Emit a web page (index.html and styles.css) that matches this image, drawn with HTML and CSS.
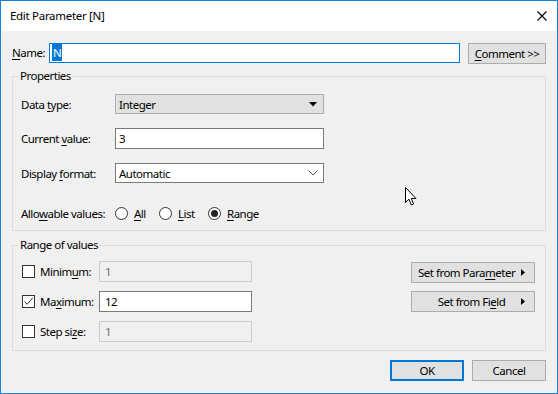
FILE: index.html
```html
<!DOCTYPE html>
<html lang="en">
<head>
    <meta charset="UTF-8">
    <title>Edit Parameter [N]</title>
    <link rel="stylesheet" href="styles.css">
</head>
<body>
    <div class="window">
        <div class="titlebar">
            <span class="title">Edit Parameter [N]</span>
            <svg class="close" width="10" height="10" viewBox="0 0 10 10">
                <path d="M0.5 0.5 L9.5 9.5 M9.5 0.5 L0.5 9.5" stroke="#000" stroke-width="1.1" fill="none"/>
            </svg>
        </div>

        <div class="content">
            <div class="name-row">
                <label class="name-label"><u>N</u>ame:</label>
                <div class="input name-input"><span class="sel">N</span></div>
                <button class="btn comment-btn"><u>C</u>omment &gt;&gt;</button>
            </div>

            <fieldset class="group props">
                <legend>Properties</legend>
                <div class="row row-type">
                    <span class="label">Data <u>t</u>ype:</span>
                    <div class="combo combo-ro">
                        <span>Integer</span>
                        <svg width="8" height="5" viewBox="0 0 8 5"><path d="M0 0 H8 L4 4.5 Z" fill="#000"/></svg>
                    </div>
                </div>
                <div class="row row-current">
                    <span class="label">Current <u>v</u>alue:</span>
                    <div class="input wide-input">3</div>
                </div>
                <div class="row row-format">
                    <span class="label">Display <u>f</u>ormat:</span>
                    <div class="combo combo-edit">
                        <span>Automatic</span>
                        <svg width="10" height="6" viewBox="0 0 10 6"><path d="M0.5 0.5 L5 5 L9.5 0.5" stroke="#555" stroke-width="1" fill="none"/></svg>
                    </div>
                </div>
                <div class="row row-allow">
                    <span class="label">Allo<u>w</u>able values:</span>
                    <span class="radio-item item-all"><span class="radio"></span><u>A</u>ll</span>
                    <span class="radio-item item-list"><span class="radio"></span><u>L</u>ist</span>
                    <span class="radio-item"><span class="radio checked"></span><u>R</u>ange</span>
                </div>
            </fieldset>

            <fieldset class="group range">
                <legend>Range of values</legend>
                <div class="range-body">
                    <div class="range-rows">
                        <div class="range-row">
                            <span class="check-label"><span class="checkbox"></span>Minim<u>u</u>m:</span>
                            <div class="input small-input disabled">1</div>
                        </div>
                        <div class="range-row">
                            <span class="check-label">
                                <span class="checkbox">
                                    <svg width="11" height="11" viewBox="0 0 11 11"><path d="M1.5 5.5 L4.2 8.3 L9.8 1.8" stroke="#333" stroke-width="1" fill="none"/></svg>
                                </span>Ma<u>x</u>imum:
                            </span>
                            <div class="input small-input">12</div>
                        </div>
                        <div class="range-row">
                            <span class="check-label"><span class="checkbox"></span>Step si<u>z</u>e:</span>
                            <div class="input small-input disabled">1</div>
                        </div>
                    </div>
                    <div class="range-buttons">
                        <button class="btn menu-btn">
                            <span>Set from Para<u>m</u>eter</span>
                            <svg width="4" height="7" viewBox="0 0 4 7"><path d="M0 0 L4 3.5 L0 7 Z" fill="#000"/></svg>
                        </button>
                        <button class="btn menu-btn">
                            <span class="center">Set from Fi<u>e</u>ld</span>
                            <svg width="4" height="7" viewBox="0 0 4 7"><path d="M0 0 L4 3.5 L0 7 Z" fill="#000"/></svg>
                        </button>
                    </div>
                </div>
            </fieldset>

            <div class="footer">
                <button class="btn dlg-btn default">OK</button>
                <button class="btn dlg-btn">Cancel</button>
            </div>
        </div>

        <!-- mouse pointer -->
        <svg class="pointer" width="13" height="20" viewBox="0 0 13 20">
            <path d="M0.5 0.5 L0.5 15.5 L4 12.2 L6.4 18 L8.6 17 L6.3 11.5 L11 11.5 Z" fill="#fff" stroke="#000" stroke-width="1" stroke-linejoin="miter"/>
        </svg>
    </div>
</body>
</html>
```

FILE: styles.css
```css
* {
    box-sizing: border-box;
}

body {
    margin: 0;
    background: #f0f0f0;
    font-family: 'Noto Sans', 'Open Sans', sans-serif;
    font-size: 11.5px;
    letter-spacing: -0.5px;
    color: #000;
    white-space: nowrap;
}

u {
    text-decoration: underline;
    text-underline-offset: 2px;
}

.window {
    position: relative;
    width: 558px;
    height: 394px;
    border: 1px solid #1883d7;
    background: #f0f0f0;
    display: flex;
    flex-direction: column;
}

.titlebar {
    height: 30px;
    background: #fff;
    display: flex;
    align-items: center;
    padding-left: 9px;
    padding-right: 10px;
    font-size: 11.5px;
    letter-spacing: -0.3px;
}

.title {
    flex: 1;
    line-height: 16px;
}

.close {
    display: block;
}

.content {
    flex: 1;
    padding: 12px 11px 0 11px;
}

.name-row {
    display: flex;
    align-items: flex-start;
    height: 21px;
}

.name-label {
    width: 37px;
    flex-shrink: 0;
    line-height: 20px;
}

.input {
    height: 21px;
    border: 1px solid #7a7a7a;
    background: #fff;
    padding: 0 3px;
    line-height: 19px;
    flex-shrink: 0;
}

.input.disabled {
    border-color: #cccccc;
    background: #f0f0f0;
    color: #6d6d6d;
}

.name-input {
    width: 411px;
    height: 20px;
    line-height: 18px;
    border-color: #0078d7;
    padding-left: 2px;
}

.sel {
    background: #0078d7;
    color: #fff;
    padding: 1px 1px;
}

.btn {
    font-family: inherit;
    font-size: 11.5px;
    letter-spacing: -0.5px;
    color: #000;
    background: #e1e1e1;
    border: 1px solid #adadad;
    height: 21px;
    padding: 0;
    margin: 0;
    line-height: 19px;
    flex-shrink: 0;
    white-space: nowrap;
}

.comment-btn {
    width: 78px;
    margin-left: 8px;
}

.group {
    margin: 0;
    padding: 0 0 7px 0;
    width: 534px;
    border: 1px solid #dcdcdc;
    min-width: 0;
}

.group legend {
    margin-left: 5px;
    padding: 0 2px;
    line-height: 16px;
    font-size: 11.5px;
}

.props {
    margin-top: 4px;
}

.row {
    display: flex;
    align-items: center;
    padding-left: 8px;
}

.row .label {
    width: 94px;
    flex-shrink: 0;
}

.row-type {
    margin-top: 10px;
}

.row-current {
    margin-top: 14px;
}

.row-format {
    margin-top: 14px;
}

.row-allow {
    margin-top: 20px;
    height: 20px;
}

.combo {
    width: 209px;
    height: 20px;
    display: flex;
    align-items: center;
    justify-content: space-between;
    padding: 0 6px 0 3px;
    border: 1px solid #7a7a7a;
    background: #fff;
}

.combo-ro {
    background: #e1e1e1;
    border-color: #adadad;
}

.combo-edit {
    padding-right: 5px;
}

.wide-input {
    width: 209px;
}

.radio-item {
    display: flex;
    align-items: center;
    flex-shrink: 0;
}

.item-all {
    width: 44px;
}

.item-list {
    width: 49px;
}

.radio {
    width: 13px;
    height: 13px;
    border: 1px solid #333;
    border-radius: 50%;
    background: #fff;
    margin-right: 6px;
    display: flex;
    align-items: center;
    justify-content: center;
}

.radio.checked::after {
    content: "";
    width: 7px;
    height: 7px;
    border-radius: 50%;
    background: #222;
}

.range {
    margin-top: 6px;
    padding-bottom: 8px;
}

.range-body {
    display: flex;
    justify-content: space-between;
    padding: 0 10px 0 9px;
}

.range-rows {
    margin-top: 8px;
    display: flex;
    flex-direction: column;
    gap: 9px;
}

.range-row {
    display: flex;
    align-items: center;
}

.check-label {
    width: 77px;
    flex-shrink: 0;
    display: flex;
    align-items: center;
}

.checkbox {
    width: 13px;
    height: 13px;
    border: 1px solid #333;
    background: #fff;
    margin-right: 5px;
    display: flex;
    align-items: center;
    justify-content: center;
}

.checkbox svg {
    display: block;
}

.small-input {
    width: 153px;
    padding-left: 5px;
}

.range-buttons {
    margin-top: 9px;
    display: flex;
    flex-direction: column;
    gap: 8px;
}

.menu-btn {
    width: 124px;
    display: flex;
    align-items: center;
    justify-content: space-between;
    padding: 0 9px 0 6px;
}

.menu-btn .center {
    flex: 1;
    text-align: center;
    padding-left: 4px;
}

.footer {
    margin-top: 9px;
    display: flex;
    justify-content: flex-end;
    gap: 8px;
}

.dlg-btn {
    width: 74px;
}

.dlg-btn.default {
    border: 2px solid #0078d7;
    line-height: 17px;
}

.pointer {
    position: absolute;
    left: 404px;
    top: 186px;
}
```
